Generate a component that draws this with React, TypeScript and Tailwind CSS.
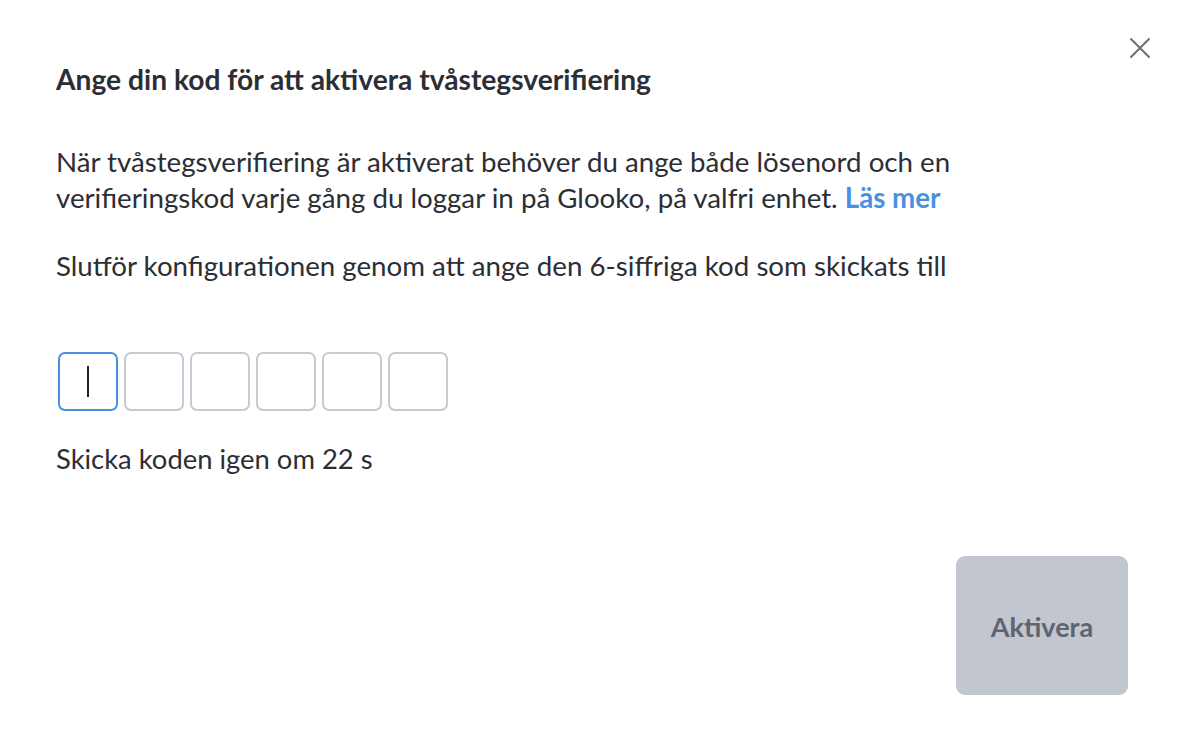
import React from 'react'

const Close = () => (
  <svg width="22" height="22" viewBox="0 0 22 22" fill="none" stroke="#6b6f76" strokeWidth="2" strokeLinecap="round">
    <path d="M2 2 L20 20 M20 2 L2 20" />
  </svg>
)

export default function App() {
  return (
    <div className="w-[1188px] h-[754px] bg-white relative text-[#2b2e34]" style={{ fontFamily: 'Lato, "Liberation Sans", sans-serif' }}>
      <button className="absolute left-[1129px] top-[37px]">
        <Close />
      </button>
      <div className="pl-[56px] pt-[61px] pr-[40px] flex flex-col h-full">
        <h2 className="text-[28.2px] font-bold leading-[36px]">Ange din kod för att aktivera tvåstegsverifiering</h2>
        <p className="text-[27.7px] leading-[36px] mt-[47px]">
          När tvåstegsverifiering är aktiverat behöver du ange både lösenord och en<br />
          verifieringskod varje gång du loggar in på Glooko, på valfri enhet.{' '}
          <a className="text-[#4a90e2] font-bold">Läs mer</a>
        </p>
        <p className="text-[27.7px] leading-[36px] mt-[32px]">Slutför konfigurationen genom att ange den 6-siffriga kod som skickats till</p>
        <div className="flex gap-[6px] mt-[68px] ml-[2px]">
          <div className="w-[60px] h-[59px] rounded-[7px] border-2 border-[#4a90e2] flex items-center justify-center">
            <div className="w-[2px] h-[31px] bg-[#222]" />
          </div>
          {[1, 2, 3, 4, 5].map(i => (
            <div key={i} className="w-[60px] h-[59px] rounded-[7px] border-2 border-[#c6cad3]" />
          ))}
        </div>
        <p className="text-[27.4px] leading-[36px] mt-[30px]">Skicka koden igen om 22 s</p>
        <div className="flex justify-end mt-[79px]">
          <button className="w-[172px] h-[139px] mr-[20px] rounded-[9px] bg-[#c1c6cf] text-[#5f6470] text-[27px] font-bold pt-[3px]">Aktivera</button>
        </div>
      </div>
    </div>
  )
}
